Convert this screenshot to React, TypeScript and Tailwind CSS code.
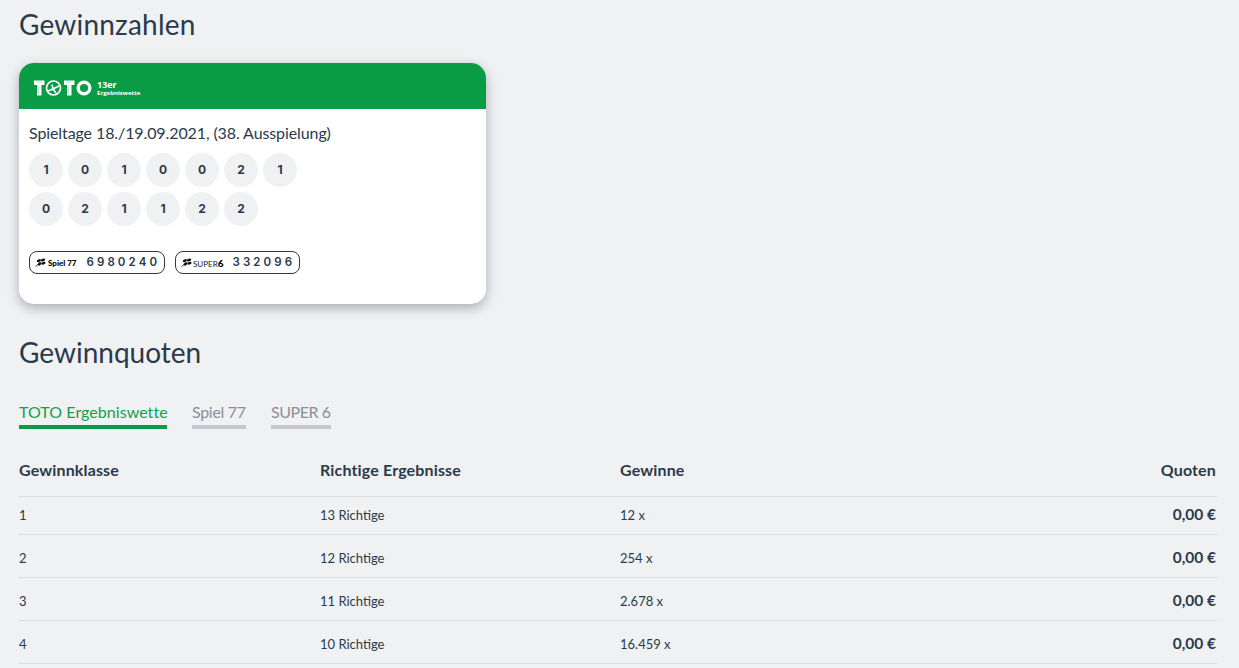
const font = { fontFamily: "Lato, 'Noto Sans', sans-serif" };

function Ball({ n }: { n: number }) {
  return (
    <div className="flex h-[34px] w-[34px] items-center justify-center rounded-full bg-[#f0f1f3] text-[12px] font-bold text-[#2b3a4a] [font-family:Inter,sans-serif]">
      {n}
    </div>
  );
}

function Clover({ className = "" }: { className?: string }) {
  return (
    <svg viewBox="0 0 12 10" className={className} fill="#111">
      <ellipse cx="4.2" cy="2.9" rx="2.4" ry="1.5" transform="rotate(-30 4.2 2.9)" />
      <ellipse cx="8.8" cy="2.2" rx="2.6" ry="1.5" transform="rotate(-20 8.8 2.2)" />
      <ellipse cx="9.2" cy="5.8" rx="2.5" ry="1.4" transform="rotate(-15 9.2 5.8)" />
      <ellipse cx="5" cy="6.6" rx="2.2" ry="1.5" transform="rotate(-40 5 6.6)" />
      <path d="M0.5 9.6 L6 4.6" stroke="#111" strokeWidth="1" />
    </svg>
  );
}

function Pill({ children, num, w }: { children: React.ReactNode; num: string; w: string }) {
  return (
    <div className={`flex h-[23px] items-center rounded-[8px] border border-[#2b3a4a] bg-white pl-[5px] ${w}`}>
      {children}
      <span className="text-[11.5px] font-semibold tracking-[3.1px] text-[#2b3a4a] [font-family:Inter,sans-serif]">{num}</span>
    </div>
  );
}

function Toto() {
  return (
    <div className="mt-[3px] flex items-center">
      <svg viewBox="0 0 58 16" className="h-[16px] w-[58px]">
        <g fill="none" stroke="#fff">
          <path d="M0 0.5 H10.5 V5 H7.5 V15.5 H3 V5 H0 Z" fill="#fff" stroke="none" />
          <path d="M2 2 H8.5 M4.5 6 V14" stroke="#0a9c44" strokeWidth="0.5" opacity="0.55" />
          <circle cx="19.5" cy="8" r="7" strokeWidth="1.7" />
          <path d="M14 11 L19 9 L22 13 M19 9 L18 4.5 M19 9 L25 6" strokeWidth="1.5" />
          <circle cx="19" cy="9" r="1.6" fill="#fff" stroke="none" />
          <path d="M30 0.5 H40.5 V5 H37.5 V15.5 H33 V5 H30 Z" fill="#fff" stroke="none" />
          <path d="M32 2 H38.5 M34.5 6 V14" stroke="#0a9c44" strokeWidth="0.5" opacity="0.55" />
          <circle cx="50" cy="8" r="5.8" strokeWidth="3.4" />
        </g>
      </svg>
      <div className="ml-[5px] mt-[1px] flex flex-col text-white [font-family:'Open_Sans',sans-serif]">
        <span className="text-[9px] font-bold leading-[9px]">13er</span>
        <span className="mt-[1px] text-[6px] font-bold leading-[7px] tracking-[0.03px]">Ergebniswette</span>
      </div>
    </div>
  );
}

const rows = [
  ["1", "13 Richtige", "12 x"],
  ["2", "12 Richtige", "254 x"],
  ["3", "11 Richtige", "2.678 x"],
  ["4", "10 Richtige", "16.459 x"],
];

export default function App() {
  return (
    <div className="h-[668px] overflow-hidden bg-[#f0f1f3] px-[19px] text-[#2b3a4a]" style={font}>
      <h2 className="pt-[8px] text-[28px] font-normal leading-[32px] tracking-[0.2px]">Gewinnzahlen</h2>

      <div className="mt-[23px] h-[241px] w-[467px] overflow-hidden rounded-[15px] bg-white shadow-[0_4px_12px_rgba(40,50,70,0.35)]">
        <div className="flex h-[46px] items-center bg-[#0a9c44] pl-[15px]">
          <Toto />
        </div>
        <div className="px-[10px]">
          <p className="mt-[14px] text-[16px] font-normal leading-[20px] tracking-[-0.1px]">Spieltage 18./19.09.2021, (38. Ausspielung)</p>
          <div className="mt-[10px] flex gap-[5px]">
            {[1, 0, 1, 0, 0, 2, 1].map((n, i) => <Ball key={i} n={n} />)}
          </div>
          <div className="mt-[5px] flex gap-[5px]">
            {[0, 2, 1, 1, 2, 2].map((n, i) => <Ball key={i} n={n} />)}
          </div>
          <div className="mt-[25px] flex gap-[10px]">
            <Pill num="6980240" w="w-[136px]">
              <Clover className="mr-[2px] h-[9px] w-[11px]" />
              <span className="mr-[10px] text-[8px] font-black leading-none text-black">Spiel 77</span>
            </Pill>
            <Pill num="332096" w="w-[125px]">
              <Clover className="mr-[1px] h-[9px] w-[11px]" />
              <span className="mr-[9px] text-[8px] leading-none text-[#222]">SUPER<b className="text-[10px] font-black text-black">6</b></span>
            </Pill>
          </div>
        </div>
      </div>

      <h2 className="mt-[32px] text-[28px] font-normal leading-[32px]">Gewinnquoten</h2>

      <div className="mt-[34px] flex gap-[25px] text-[16px] font-normal leading-[20px]">
        <div className="w-[148px] whitespace-nowrap border-b-[4px] border-[#0a9c44] pb-[3px] tracking-[0.05px] text-[#12a04c]">TOTO Ergebniswette</div>
        <div className="w-[54px] whitespace-nowrap border-b-[4px] border-[#c8c9d0] pb-[3px] tracking-[-0.3px] text-[#8c8e9a]">Spiel 77</div>
        <div className="w-[60px] whitespace-nowrap border-b-[4px] border-[#c8c9d0] pb-[3px] tracking-[-0.45px] text-[#8c8e9a]">SUPER 6</div>
      </div>

      <table className="mt-[21px] w-[1198px] table-fixed border-collapse">
        <thead>
          <tr className="h-[46px] border-b border-[#dcdee1] text-[16px] font-bold tracking-[0.15px]">
            <th className="w-[301px] pb-[6px] text-left font-bold">Gewinnklasse</th>
            <th className="w-[300px] pb-[6px] text-left font-bold">Richtige Ergebnisse</th>
            <th className="pb-[6px] text-left font-bold">Gewinne</th>
            <th className="pb-[6px] pr-[1px] text-right font-bold">Quoten</th>
          </tr>
        </thead>
        <tbody>
          {rows.map((r, i) => (
            <tr key={r[0]} className={`border-b border-[#dcdee1] text-[13px] ${i === 0 ? "h-[38px]" : "h-[43px]"}`}>
              <td className={i === 0 ? "pt-[2px]" : "pt-[7px]"}>{r[0]}</td>
              <td className={i === 0 ? "pt-[2px]" : "pt-[7px]"}>{r[1]}</td>
              <td className={i === 0 ? "pt-[2px]" : "pt-[7px]"}>{r[2]}</td>
              <td className={`pr-[1px] text-right text-[15.5px] font-bold ${i === 0 ? "" : "pt-[5px]"}`}>0,00 €</td>
            </tr>
          ))}
        </tbody>
      </table>
    </div>
  );
}
